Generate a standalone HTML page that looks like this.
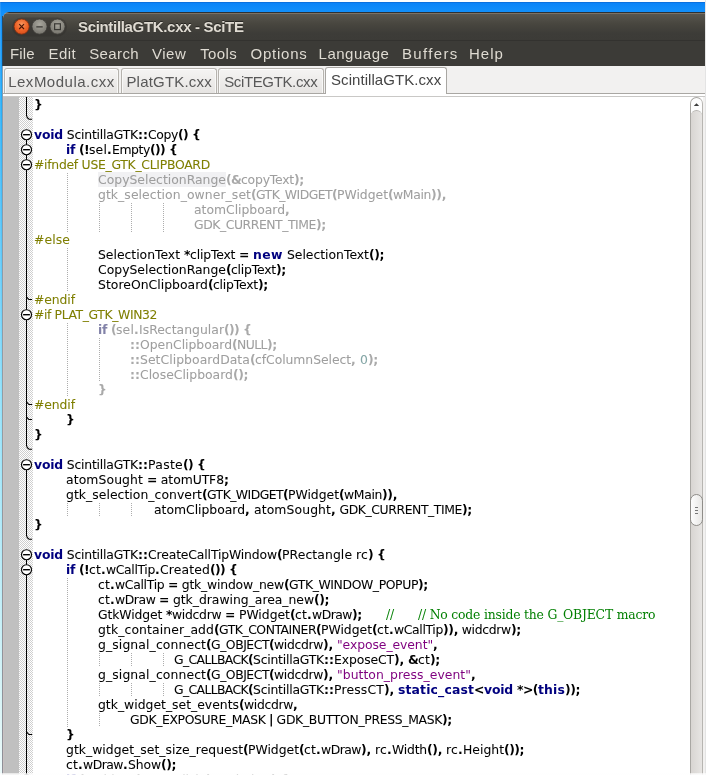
<!DOCTYPE html>
<html><head><meta charset="utf-8"><title>ScintillaGTK.cxx - SciTE</title>
<style>
html,body{margin:0;padding:0}
body{width:706px;height:775px;overflow:hidden;position:relative;background:linear-gradient(#0a70de 0,#0a70de 2.5px,#0a84f8 3.5px,#1290fa 12px,#1a9cf8 60px,#26aef8 100px,#8ee0fa 400px,#d6f4f6 700px,#ecfafa 775px);font-family:"Liberation Sans","DejaVu Sans",sans-serif}
#topw{position:absolute;left:0;top:0;width:706px;height:2px;background:#fdfdfd}
#win{position:absolute;left:3px;top:12px;width:702px;height:763px;background:#f2f1f0;border-radius:6px 0 0 0;overflow:hidden}
#botf{position:absolute;left:0;top:773px;width:706px;height:2px;background:linear-gradient(rgba(255,255,255,.55),rgba(255,255,255,.95));z-index:10}
#lcol0{position:absolute;left:0;top:2px;width:1px;height:773px;background:rgba(255,255,255,.12)}
#lcol{position:absolute;left:2px;top:16px;width:1px;height:50px;background:#2b4963}
#lcol2{position:absolute;left:2px;top:66px;width:1px;height:709px;background:linear-gradient(#7f9cb4,#949ca2 50%,#8e8e96)}
#rcol{position:absolute;left:705px;top:0;width:1px;height:775px;background:#e4e4e4;z-index:9}
#title{position:absolute;left:0;top:0;width:702px;height:29px;box-sizing:border-box;background:linear-gradient(#7d7264 0,#7d7264 1px,#57554e 1px,#48463f 40%,#3d3c38 75%,#3c3b37 100%);border-top:1px solid #2c3136;border-bottom:1px solid #33322f}
#menu{position:absolute;left:0;top:29px;width:702px;height:25px;background:#3c3b37}
#tabs{position:absolute;left:0;top:54px;width:702px;height:29px;background:#f2f1f0}
.tab{position:absolute;top:2px;height:25px;box-sizing:border-box;border:1px solid #b6b3ae;border-bottom:none;border-radius:3px 3px 0 0;background:linear-gradient(#f5f4f3,#e6e4e2);box-shadow:inset 0 1px 0 #fff,inset 1px 0 0 #f8f8f7,inset -1px 0 0 #f8f8f7}
#chrometext{z-index:5;position:absolute;left:0;top:0;width:706px;height:96px;will-change:transform}
.w{position:absolute;white-space:pre}
.mi{font-size:15px;color:#dfdbd2}
.tt{font-size:15px;color:#585858}
.ta{color:#454545}
.ti{font-weight:bold;font-size:15px;color:#dfdbd2;text-shadow:0 -1px 0 rgba(0,0,0,.45)}
.tab.act{top:1px;height:27px;background:#fff;z-index:3;box-shadow:none;border-color:#a9a7a3}
.ln{position:absolute;height:15px;line-height:15px;white-space:pre;font-family:"DejaVu Sans","Liberation Sans",sans-serif;font-size:12.4px;color:#000}
.ln{-webkit-text-stroke-width:0.06px}
.ln span{position:absolute;top:0}
.k,.o,.ik,.io,.s,.c{-webkit-text-stroke-width:0}
.k{font-weight:bold;color:#00007f}.o{font-weight:bold;color:#000}.p{color:#7f7f00}.s{color:#7f007f}.n{color:#007f7f}
.c{font-family:"DejaVu Serif","Liberation Serif",serif;color:#007f00;font-size:12.4px}
.ik{font-weight:bold;color:#8282a8}.io{font-weight:bold;color:#a9a9a9}.ii{color:#9e9e9e}.in{color:#84a6a6}
#hlbox{position:absolute;left:98px;top:172px;width:128px;height:15px;background:#f1f1f3}
.g{position:absolute;width:1px;background:repeating-linear-gradient(#fff 0,#fff 1px,#adadad 1px,#adadad 2px)}
.fold{position:absolute;left:0;top:0}
#edwrap{position:absolute;left:0;top:0;width:706px;height:775px;will-change:transform}
#edbg{position:absolute;left:3px;top:94px;width:702px;height:681px;background:#fff}
#l93{position:absolute;left:3px;top:93px;width:322px;height:1px;background:#a9a7a3}
#l93b{position:absolute;left:447px;top:93px;width:258px;height:1px;background:#a9a7a3}
#l96{position:absolute;left:3px;top:96px;width:702px;height:1px;background:#c9c8c6}
#edge{position:absolute;left:3px;top:97px;width:1px;height:678px;background:#c9c1c1}
#mg{position:absolute;left:4px;top:97px;width:15px;height:678px;background:#c0c0c0}
#fm{position:absolute;left:19px;top:97px;width:14px;height:678px;background:conic-gradient(#fff 25%,#cfcfcf 0 50%,#fff 0 75%,#cfcfcf 0) 0 0/2px 2px}
#sb{position:absolute;left:690px;top:97px;width:13px;height:690px;box-sizing:border-box;border:1px solid #a9a7a3;border-right-color:#b7b5b1;border-radius:6.5px 6.5px 0 0;background:#fdfdfd}
#sbr{position:absolute;left:703px;top:97px;width:3px;height:678px;background:#f2f1f0}
#sbtr{position:absolute;left:691px;top:110px;width:11px;height:680px;border-radius:5.5px 5.5px 0 0;background:linear-gradient(90deg,#d8d5d2,#e7e5e3);border-top:1px solid #b5b3af;box-sizing:border-box}
#thumb{position:absolute;left:690px;top:494px;width:13px;height:32px;box-sizing:border-box;border:1px solid #8f8d89;border-radius:6.5px;background:linear-gradient(90deg,#fdfdfd,#e8e7e5)}
#thumb i{position:absolute;left:4px;width:3px;height:1px;background:#777}

</style></head><body>
<div id="topw"></div><div id="rcol"></div><div id="lcol0"></div><div id="lcol"></div><div id="lcol2"></div>
<div id="win">
 <div id="title">
  <svg style="position:absolute;left:0;top:0" width="80" height="27" viewBox="0 0 80 27">
   <defs>
    <radialGradient id="gc" cx="50%" cy="35%" r="65%"><stop offset="0" stop-color="#f8975f"/><stop offset="0.6" stop-color="#ee6327"/><stop offset="1" stop-color="#d9501c"/></radialGradient>
    <radialGradient id="gg" cx="50%" cy="35%" r="65%"><stop offset="0" stop-color="#a9a79e"/><stop offset="0.6" stop-color="#8b8981"/><stop offset="1" stop-color="#75736c"/></radialGradient>
   </defs>
   <rect x="9" y="4.5" width="55" height="19" rx="9.5" fill="#2f2e2a" opacity="0.4"/>
   <circle cx="18.6" cy="13.6" r="7.6" fill="url(#gc)" stroke="#7a2d10" stroke-width="0.8"/>
   <circle cx="36.5" cy="13.6" r="7.6" fill="url(#gg)" stroke="#3a3935" stroke-width="0.8"/>
   <circle cx="54.5" cy="13.6" r="7.6" fill="url(#gg)" stroke="#3a3935" stroke-width="0.8"/>
   <path d="M16.2 11.2 L21 16 M21 11.2 L16.2 16" stroke="#4a1606" stroke-width="1.1" fill="none"/>
   <path d="M33.3 13.8 H39.7" stroke="#3a3935" stroke-width="1.3" fill="none"/>
   <rect x="51.6" y="10.8" width="5.8" height="5.8" stroke="#3a3935" stroke-width="1.2" fill="none"/>
  </svg>
 </div>
 <div id="menu"></div>
 <div id="tabs">
  <div class="tab" style="left:1px;width:115px"></div>
  <div class="tab" style="left:118px;width:96px"></div>
  <div class="tab" style="left:215px;width:106px"></div>
  <div class="tab act" style="left:322px;width:122px"></div>
 </div>
</div>

<div id="chrometext"><span id="ttl" class="w ti" style="left:78.00px;top:17.5px;letter-spacing:-0.326px">ScintillaGTK.cxx - SciTE</span><span id="m0" class="w mi" style="left:10.00px;top:44.5px;letter-spacing:0.167px">File</span><span id="m1" class="w mi" style="left:48.40px;top:44.5px;letter-spacing:0.499px">Edit</span><span id="m2" class="w mi" style="left:89.20px;top:44.5px;letter-spacing:0.400px">Search</span><span id="m3" class="w mi" style="left:152.00px;top:44.5px;letter-spacing:0.500px">View</span><span id="m4" class="w mi" style="left:200.20px;top:44.5px;letter-spacing:0.375px">Tools</span><span id="m5" class="w mi" style="left:250.60px;top:44.5px;letter-spacing:0.750px">Options</span><span id="m6" class="w mi" style="left:318.60px;top:44.5px;letter-spacing:0.500px">Language</span><span id="m7" class="w mi" style="left:402.00px;top:44.5px;letter-spacing:1.332px">Buffers</span><span id="m8" class="w mi" style="left:469.00px;top:44.5px;letter-spacing:0.999px">Help</span><span id="t0" class="w tt" style="left:8.20px;top:72.5px;letter-spacing:0.501px">LexModula.cxx</span><span id="t1" class="w tt" style="left:126.40px;top:72.5px;letter-spacing:0.200px">PlatGTK.cxx</span><span id="t2" class="w tt" style="left:224.20px;top:72.5px;letter-spacing:-0.364px">SciTEGTK.cxx</span><span id="t3" class="w tt ta" style="left:331.00px;top:71px;letter-spacing:0.066px">ScintillaGTK.cxx</span></div>
<div id="edbg"></div><div id="l93"></div><div id="l93b"></div><div id="l96"></div><div id="edge"></div><div id="mg"></div><div id="fm"></div>
<div id="sbr"></div><div id="sb"></div><div id="sbtr"></div>
<svg style="position:absolute;left:693px;top:102px" width="7" height="5" viewBox="0 0 7 5"><path d="M3.5 1.2 L6.2 4.1 H0.8 Z" fill="#3c3c3c"/></svg>
<div id="thumb"><i style="top:12px"></i><i style="top:15px"></i><i style="top:18px"></i></div>

<div id="edwrap">
<div id="hlbox"></div><i class="g" style="left:67px;top:172px;height:60px"></i><i class="g" style="left:99px;top:202px;height:30px"></i><i class="g" style="left:131px;top:202px;height:30px"></i><i class="g" style="left:163px;top:202px;height:30px"></i><i class="g" style="left:67px;top:247px;height:45px"></i><i class="g" style="left:67px;top:322px;height:75px"></i><i class="g" style="left:99px;top:337px;height:45px"></i><i class="g" style="left:67px;top:502px;height:15px"></i><i class="g" style="left:99px;top:502px;height:15px"></i><i class="g" style="left:131px;top:502px;height:15px"></i><i class="g" style="left:67px;top:577px;height:150px"></i><i class="g" style="left:99px;top:652px;height:15px"></i><i class="g" style="left:131px;top:652px;height:15px"></i><i class="g" style="left:163px;top:652px;height:15px"></i><i class="g" style="left:99px;top:682px;height:15px"></i><i class="g" style="left:131px;top:682px;height:15px"></i><i class="g" style="left:163px;top:682px;height:15px"></i><i class="g" style="left:99px;top:712px;height:15px"></i>
<svg class="fold" width="706" height="775" viewBox="0 0 706 775" stroke="#000" stroke-width="1" fill="none"><g shape-rendering="crispEdges"><path d="M26.5 97 V112"/><path d="M26.5 112 V115.5"/><path d="M26.5 139.5 V142"/><path d="M26.5 142 V144.5"/><path d="M26.5 154.5 V157"/><path d="M26.5 157 V159.5"/><path d="M26.5 169.5 V172"/><path d="M26.5 172 V187"/><path d="M26.5 187 V202"/><path d="M26.5 202 V217"/><path d="M26.5 217 V232"/><path d="M26.5 232 V247"/><path d="M26.5 247 V262"/><path d="M26.5 262 V277"/><path d="M26.5 277 V292"/><path d="M26.5 292 V307"/><path d="M26.5 307 V309.5"/><path d="M26.5 319.5 V322"/><path d="M26.5 322 V337"/><path d="M26.5 337 V352"/><path d="M26.5 352 V367"/><path d="M26.5 367 V382"/><path d="M26.5 382 V397"/><path d="M26.5 397 V412"/><path d="M26.5 412 V427"/><path d="M26.5 427 V442"/><path d="M26.5 442 V445.5"/><path d="M26.5 469.5 V472"/><path d="M26.5 472 V487"/><path d="M26.5 487 V502"/><path d="M26.5 502 V517"/><path d="M26.5 517 V532"/><path d="M26.5 532 V535.5"/><path d="M26.5 559.5 V562"/><path d="M26.5 562 V564.5"/><path d="M26.5 574.5 V577"/><path d="M26.5 577 V592"/><path d="M26.5 592 V607"/><path d="M26.5 607 V622"/><path d="M26.5 622 V637"/><path d="M26.5 637 V652"/><path d="M26.5 652 V667"/><path d="M26.5 667 V682"/><path d="M26.5 682 V697"/><path d="M26.5 697 V712"/><path d="M26.5 712 V727"/><path d="M26.5 727 V742"/><path d="M26.5 742 V757"/><path d="M26.5 757 V772"/><path d="M26.5 772 V774.5"/><path d="M26.5 784.5 V787"/></g><path d="M26.5 115.3 q0.2 3.0 2.6 3.9 h3" stroke-width="1.1"/><circle cx="26.5" cy="134.7" r="5" fill="#fff" stroke-width="1.15"/><path d="M23.1 134.7 H29.9" stroke-width="1.4"/><circle cx="26.5" cy="149.7" r="5" fill="#fff" stroke-width="1.15"/><path d="M23.1 149.7 H29.9" stroke-width="1.4"/><circle cx="26.5" cy="164.7" r="5" fill="#fff" stroke-width="1.15"/><path d="M23.1 164.7 H29.9" stroke-width="1.4"/><path d="M26.7 297.1 l2.2 2.4 h3.2" stroke-width="1.1"/><circle cx="26.5" cy="314.7" r="5" fill="#fff" stroke-width="1.15"/><path d="M23.1 314.7 H29.9" stroke-width="1.4"/><path d="M26.7 402.1 l2.2 2.4 h3.2" stroke-width="1.1"/><path d="M26.7 417.1 l2.2 2.4 h3.2" stroke-width="1.1"/><path d="M26.5 445.3 q0.2 3.0 2.6 3.9 h3" stroke-width="1.1"/><circle cx="26.5" cy="464.7" r="5" fill="#fff" stroke-width="1.15"/><path d="M23.1 464.7 H29.9" stroke-width="1.4"/><path d="M26.5 535.3 q0.2 3.0 2.6 3.9 h3" stroke-width="1.1"/><circle cx="26.5" cy="554.7" r="5" fill="#fff" stroke-width="1.15"/><path d="M23.1 554.7 H29.9" stroke-width="1.4"/><circle cx="26.5" cy="569.7" r="5" fill="#fff" stroke-width="1.15"/><path d="M23.1 569.7 H29.9" stroke-width="1.4"/><path d="M26.7 732.1 l2.2 2.4 h3.2" stroke-width="1.1"/><circle cx="26.5" cy="779.7" r="5" fill="#fff" stroke-width="1.15"/><path d="M23.1 779.7 H29.9" stroke-width="1.4"/></svg>
<div class="ln" style="top:97.0px;left:34px"><span class="o" style="left:0px;letter-spacing:0.17px">}</span></div>
<div class="ln" style="top:112.0px;left:34px"></div>
<div class="ln" style="top:127.0px;left:34px"><span class="k" style="left:0px;letter-spacing:-0.18px">void</span><span class="i" style="left:29px;letter-spacing:-0.20px"> ScintillaGTK</span><span class="o" style="left:104px;letter-spacing:0.04px">::</span><span class="i" style="left:114px;letter-spacing:-0.36px">Copy</span><span class="o" style="left:144px;letter-spacing:-0.66px">()</span><span class="i" style="left:154px;letter-spacing:0.05px"> </span><span class="o" style="left:158px;letter-spacing:0.17px">{</span></div>
<div class="ln" style="top:142.0px;left:66px"><span class="k" style="left:0px;letter-spacing:-0.32px">if</span><span class="i" style="left:9px;letter-spacing:0.05px"> </span><span class="o" style="left:13px;letter-spacing:-0.66px">(!</span><span class="i" style="left:23px;letter-spacing:0.16px">sel</span><span class="o" style="left:41px;letter-spacing:0.28px">.</span><span class="i" style="left:46px;letter-spacing:-0.39px">Empty</span><span class="o" style="left:84px;letter-spacing:-0.67px">())</span><span class="i" style="left:99px;letter-spacing:0.05px"> </span><span class="o" style="left:103px;letter-spacing:0.17px">{</span></div>
<div class="ln" style="top:157.0px;left:34px"><span class="p" style="left:0px;letter-spacing:-0.28px">#ifndef USE_GTK_CLIPBOARD</span></div>
<div class="ln" style="top:172.0px;left:98px"><span class="ii hl" style="left:0px;letter-spacing:0.01px">CopySelectionRange</span><span class="io" style="left:128px;letter-spacing:-0.73px">(&amp;</span><span class="ii" style="left:143px;letter-spacing:-0.21px">copyText</span><span class="io" style="left:196px;letter-spacing:-0.31px">);</span></div>
<div class="ln" style="top:187.0px;left:98px"><span class="ii" style="left:0px;letter-spacing:0.07px">gtk_selection_owner_set</span><span class="io" style="left:153px;letter-spacing:-0.67px">(</span><span class="ii" style="left:158px;letter-spacing:-0.55px">GTK_WIDGET</span><span class="io" style="left:234px;letter-spacing:-0.67px">(</span><span class="ii" style="left:239px;letter-spacing:-0.02px">PWidget</span><span class="io" style="left:290px;letter-spacing:-0.67px">(</span><span class="ii" style="left:295px;letter-spacing:-0.34px">wMain</span><span class="io" style="left:333px;letter-spacing:-0.35px">)),</span></div>
<div class="ln" style="top:202.0px;left:194px"><span class="ii" style="left:0px;letter-spacing:-0.02px">atomClipboard</span><span class="io" style="left:91px;letter-spacing:0.28px">,</span></div>
<div class="ln" style="top:217.0px;left:194px"><span class="ii" style="left:0px;letter-spacing:-0.44px">GDK_CURRENT_TIME</span><span class="io" style="left:122px;letter-spacing:-0.31px">);</span></div>
<div class="ln" style="top:232.0px;left:34px"><span class="p" style="left:0px;letter-spacing:0.09px">#else</span></div>
<div class="ln" style="top:247.0px;left:98px"><span class="i" style="left:0px;letter-spacing:-0.01px">SelectionText </span><span class="o" style="left:86px;letter-spacing:-0.48px">*</span><span class="i" style="left:92px;letter-spacing:-0.17px">clipText </span><span class="o" style="left:141px;letter-spacing:-0.39px">=</span><span class="i" style="left:151px;letter-spacing:0.05px"> </span><span class="k" style="left:155px;letter-spacing:0.44px">new</span><span class="i" style="left:185px;letter-spacing:-0.01px"> SelectionText</span><span class="o" style="left:271px;letter-spacing:-0.43px">();</span></div>
<div class="ln" style="top:262.0px;left:98px"><span class="i" style="left:0px;letter-spacing:0.01px">CopySelectionRange</span><span class="o" style="left:128px;letter-spacing:-0.67px">(</span><span class="i" style="left:133px;letter-spacing:-0.20px">clipText</span><span class="o" style="left:178px;letter-spacing:-0.31px">);</span></div>
<div class="ln" style="top:277.0px;left:98px"><span class="i" style="left:0px;letter-spacing:0.03px">StoreOnClipboard</span><span class="o" style="left:110px;letter-spacing:-0.67px">(</span><span class="i" style="left:115px;letter-spacing:-0.20px">clipText</span><span class="o" style="left:160px;letter-spacing:-0.31px">);</span></div>
<div class="ln" style="top:292.0px;left:34px"><span class="p" style="left:0px;letter-spacing:-0.09px">#endif</span></div>
<div class="ln" style="top:307.0px;left:34px"><span class="p" style="left:0px;letter-spacing:-0.39px">#if PLAT_GTK_WIN32</span></div>
<div class="ln" style="top:322.0px;left:98px"><span class="ik" style="left:0px;letter-spacing:-0.32px">if</span><span class="ii" style="left:9px;letter-spacing:0.05px"> </span><span class="io" style="left:13px;letter-spacing:-0.67px">(</span><span class="ii" style="left:18px;letter-spacing:0.16px">sel</span><span class="io" style="left:36px;letter-spacing:0.28px">.</span><span class="ii" style="left:41px;letter-spacing:0.02px">IsRectangular</span><span class="io" style="left:126px;letter-spacing:-0.67px">())</span><span class="ii" style="left:141px;letter-spacing:0.05px"> </span><span class="io" style="left:145px;letter-spacing:0.17px">{</span></div>
<div class="ln" style="top:337.0px;left:130px"><span class="io" style="left:0px;letter-spacing:0.04px">::</span><span class="ii" style="left:10px;letter-spacing:-0.02px">OpenClipboard</span><span class="io" style="left:102px;letter-spacing:-0.67px">(</span><span class="ii" style="left:107px;letter-spacing:-0.54px">NULL</span><span class="io" style="left:137px;letter-spacing:-0.31px">);</span></div>
<div class="ln" style="top:352.0px;left:130px"><span class="io" style="left:0px;letter-spacing:0.04px">::</span><span class="ii" style="left:10px;letter-spacing:0.05px">SetClipboardData</span><span class="io" style="left:120px;letter-spacing:-0.67px">(</span><span class="ii" style="left:125px;letter-spacing:-0.06px">cfColumnSelect</span><span class="io" style="left:221px;letter-spacing:0.28px">,</span><span class="ii" style="left:226px;letter-spacing:0.05px"> </span><span class="in" style="left:230px;letter-spacing:0.11px">0</span><span class="io" style="left:238px;letter-spacing:-0.31px">);</span></div>
<div class="ln" style="top:367.0px;left:130px"><span class="io" style="left:0px;letter-spacing:0.04px">::</span><span class="ii" style="left:10px;letter-spacing:0.00px">CloseClipboard</span><span class="io" style="left:103px;letter-spacing:-0.43px">();</span></div>
<div class="ln" style="top:382.0px;left:98px"><span class="io" style="left:0px;letter-spacing:0.17px">}</span></div>
<div class="ln" style="top:397.0px;left:34px"><span class="p" style="left:0px;letter-spacing:-0.09px">#endif</span></div>
<div class="ln" style="top:412.0px;left:66px"><span class="o" style="left:0px;letter-spacing:0.17px">}</span></div>
<div class="ln" style="top:427.0px;left:34px"><span class="o" style="left:0px;letter-spacing:0.17px">}</span></div>
<div class="ln" style="top:442.0px;left:34px"></div>
<div class="ln" style="top:457.0px;left:34px"><span class="k" style="left:0px;letter-spacing:-0.18px">void</span><span class="i" style="left:29px;letter-spacing:-0.20px"> ScintillaGTK</span><span class="o" style="left:104px;letter-spacing:0.04px">::</span><span class="i" style="left:114px;letter-spacing:0.31px">Paste</span><span class="o" style="left:149px;letter-spacing:-0.66px">()</span><span class="i" style="left:159px;letter-spacing:0.05px"> </span><span class="o" style="left:163px;letter-spacing:0.17px">{</span></div>
<div class="ln" style="top:472.0px;left:66px"><span class="i" style="left:0px;letter-spacing:0.10px">atomSought </span><span class="o" style="left:81px;letter-spacing:-0.39px">=</span><span class="i" style="left:91px;letter-spacing:-0.08px"> atomUTF8</span><span class="o" style="left:158px;letter-spacing:0.03px">;</span></div>
<div class="ln" style="top:487.0px;left:66px"><span class="i" style="left:0px;letter-spacing:0.04px">gtk_selection_convert</span><span class="o" style="left:136px;letter-spacing:-0.67px">(</span><span class="i" style="left:141px;letter-spacing:-0.55px">GTK_WIDGET</span><span class="o" style="left:217px;letter-spacing:-0.67px">(</span><span class="i" style="left:222px;letter-spacing:-0.02px">PWidget</span><span class="o" style="left:273px;letter-spacing:-0.67px">(</span><span class="i" style="left:278px;letter-spacing:-0.34px">wMain</span><span class="o" style="left:316px;letter-spacing:-0.35px">)),</span></div>
<div class="ln" style="top:502.0px;left:154px"><span class="i" style="left:0px;letter-spacing:-0.02px">atomClipboard</span><span class="o" style="left:91px;letter-spacing:0.28px">,</span><span class="i" style="left:96px;letter-spacing:0.10px"> atomSought</span><span class="o" style="left:177px;letter-spacing:0.28px">,</span><span class="i" style="left:182px;letter-spacing:-0.41px"> GDK_CURRENT_TIME</span><span class="o" style="left:308px;letter-spacing:-0.31px">);</span></div>
<div class="ln" style="top:517.0px;left:34px"><span class="o" style="left:0px;letter-spacing:0.17px">}</span></div>
<div class="ln" style="top:532.0px;left:34px"></div>
<div class="ln" style="top:547.0px;left:34px"><span class="k" style="left:0px;letter-spacing:-0.18px">void</span><span class="i" style="left:29px;letter-spacing:-0.20px"> ScintillaGTK</span><span class="o" style="left:104px;letter-spacing:0.04px">::</span><span class="i" style="left:114px;letter-spacing:-0.14px">CreateCallTipWindow</span><span class="o" style="left:243px;letter-spacing:-0.67px">(</span><span class="i" style="left:248px;letter-spacing:0.09px">PRectangle rc</span><span class="o" style="left:334px;letter-spacing:-0.67px">)</span><span class="i" style="left:339px;letter-spacing:0.05px"> </span><span class="o" style="left:343px;letter-spacing:0.17px">{</span></div>
<div class="ln" style="top:562.0px;left:66px"><span class="k" style="left:0px;letter-spacing:-0.32px">if</span><span class="i" style="left:9px;letter-spacing:0.05px"> </span><span class="o" style="left:13px;letter-spacing:-0.66px">(!</span><span class="i" style="left:23px;letter-spacing:0.16px">ct</span><span class="o" style="left:35px;letter-spacing:0.28px">.</span><span class="i" style="left:40px;letter-spacing:-0.35px">wCallTip</span><span class="o" style="left:89px;letter-spacing:0.28px">.</span><span class="i" style="left:94px;letter-spacing:0.14px">Created</span><span class="o" style="left:144px;letter-spacing:-0.67px">())</span><span class="i" style="left:159px;letter-spacing:0.05px"> </span><span class="o" style="left:163px;letter-spacing:0.17px">{</span></div>
<div class="ln" style="top:577.0px;left:98px"><span class="i" style="left:0px;letter-spacing:0.16px">ct</span><span class="o" style="left:12px;letter-spacing:0.28px">.</span><span class="i" style="left:17px;letter-spacing:-0.30px">wCallTip </span><span class="o" style="left:70px;letter-spacing:-0.39px">=</span><span class="i" style="left:80px;letter-spacing:-0.19px"> gtk_window_new</span><span class="o" style="left:186px;letter-spacing:-0.67px">(</span><span class="i" style="left:191px;letter-spacing:-0.39px">GTK_WINDOW_POPUP</span><span class="o" style="left:320px;letter-spacing:-0.31px">);</span></div>
<div class="ln" style="top:592.0px;left:98px"><span class="i" style="left:0px;letter-spacing:0.16px">ct</span><span class="o" style="left:12px;letter-spacing:0.28px">.</span><span class="i" style="left:17px;letter-spacing:-0.41px">wDraw </span><span class="o" style="left:61px;letter-spacing:-0.39px">=</span><span class="i" style="left:71px;letter-spacing:-0.02px"> gtk_drawing_area_new</span><span class="o" style="left:216px;letter-spacing:-0.43px">();</span></div>
<div class="ln" style="top:607.0px;left:98px"><span class="i" style="left:0px;letter-spacing:-0.12px">GtkWidget </span><span class="o" style="left:68px;letter-spacing:-0.48px">*</span><span class="i" style="left:74px;letter-spacing:-0.29px">widcdrw </span><span class="o" style="left:127px;letter-spacing:-0.39px">=</span><span class="i" style="left:137px;letter-spacing:-0.01px"> PWidget</span><span class="o" style="left:192px;letter-spacing:-0.67px">(</span><span class="i" style="left:197px;letter-spacing:0.16px">ct</span><span class="o" style="left:209px;letter-spacing:0.28px">.</span><span class="i" style="left:214px;letter-spacing:-0.50px">wDraw</span><span class="o" style="left:254px;letter-spacing:-0.31px">);</span><span class="c" style="left:288px;letter-spacing:-0.18px">//</span><span class="c" style="left:320px;letter-spacing:-0.20px">// No code inside the G_OBJECT macro</span></div>
<div class="ln" style="top:622.0px;left:98px"><span class="i" style="left:0px;letter-spacing:0.10px">gtk_container_add</span><span class="o" style="left:116px;letter-spacing:-0.67px">(</span><span class="i" style="left:121px;letter-spacing:-0.47px">GTK_CONTAINER</span><span class="o" style="left:218px;letter-spacing:-0.67px">(</span><span class="i" style="left:223px;letter-spacing:-0.02px">PWidget</span><span class="o" style="left:274px;letter-spacing:-0.67px">(</span><span class="i" style="left:279px;letter-spacing:0.16px">ct</span><span class="o" style="left:291px;letter-spacing:0.28px">.</span><span class="i" style="left:296px;letter-spacing:-0.35px">wCallTip</span><span class="o" style="left:345px;letter-spacing:-0.35px">)),</span><span class="i" style="left:360px;letter-spacing:-0.29px"> widcdrw</span><span class="o" style="left:413px;letter-spacing:-0.31px">);</span></div>
<div class="ln" style="top:637.0px;left:98px"><span class="i" style="left:0px;letter-spacing:0.11px">g_signal_connect</span><span class="o" style="left:108px;letter-spacing:-0.67px">(</span><span class="i" style="left:113px;letter-spacing:-0.47px">G_OBJECT</span><span class="o" style="left:171px;letter-spacing:-0.67px">(</span><span class="i" style="left:176px;letter-spacing:-0.34px">widcdrw</span><span class="o" style="left:225px;letter-spacing:-0.19px">),</span><span class="i" style="left:235px;letter-spacing:0.05px"> </span><span class="s" style="left:239px;letter-spacing:-0.08px">&quot;expose_event&quot;</span><span class="o" style="left:335px;letter-spacing:0.28px">,</span></div>
<div class="ln" style="top:652.0px;left:174px"><span class="i" style="left:0px;letter-spacing:-0.63px">G_CALLBACK</span><span class="o" style="left:74px;letter-spacing:-0.67px">(</span><span class="i" style="left:79px;letter-spacing:-0.22px">ScintillaGTK</span><span class="o" style="left:150px;letter-spacing:0.04px">::</span><span class="i" style="left:160px;letter-spacing:-0.12px">ExposeCT</span><span class="o" style="left:220px;letter-spacing:-0.19px">),</span><span class="i" style="left:230px;letter-spacing:0.05px"> </span><span class="o" style="left:234px;letter-spacing:-0.81px">&amp;</span><span class="i" style="left:244px;letter-spacing:0.16px">ct</span><span class="o" style="left:256px;letter-spacing:-0.31px">);</span></div>
<div class="ln" style="top:667.0px;left:98px"><span class="i" style="left:0px;letter-spacing:0.11px">g_signal_connect</span><span class="o" style="left:108px;letter-spacing:-0.67px">(</span><span class="i" style="left:113px;letter-spacing:-0.47px">G_OBJECT</span><span class="o" style="left:171px;letter-spacing:-0.67px">(</span><span class="i" style="left:176px;letter-spacing:-0.34px">widcdrw</span><span class="o" style="left:225px;letter-spacing:-0.19px">),</span><span class="i" style="left:235px;letter-spacing:0.05px"> </span><span class="s" style="left:239px;letter-spacing:0.04px">&quot;button_press_event&quot;</span><span class="o" style="left:373px;letter-spacing:0.28px">,</span></div>
<div class="ln" style="top:682.0px;left:174px"><span class="i" style="left:0px;letter-spacing:-0.63px">G_CALLBACK</span><span class="o" style="left:74px;letter-spacing:-0.67px">(</span><span class="i" style="left:79px;letter-spacing:-0.22px">ScintillaGTK</span><span class="o" style="left:150px;letter-spacing:0.04px">::</span><span class="i" style="left:160px;letter-spacing:0.17px">PressCT</span><span class="o" style="left:210px;letter-spacing:-0.19px">),</span><span class="i" style="left:220px;letter-spacing:0.05px"> </span><span class="k" style="left:224px;letter-spacing:0.15px">static_cast</span><span class="o" style="left:300px;letter-spacing:-0.39px">&lt;</span><span class="k" style="left:310px;letter-spacing:-0.18px">void</span><span class="i" style="left:339px;letter-spacing:0.05px"> </span><span class="o" style="left:343px;letter-spacing:-0.51px">*&gt;(</span><span class="k" style="left:364px;letter-spacing:0.16px">this</span><span class="o" style="left:391px;letter-spacing:-0.43px">));</span></div>
<div class="ln" style="top:697.0px;left:98px"><span class="i" style="left:0px;letter-spacing:0.00px">gtk_widget_set_events</span><span class="o" style="left:141px;letter-spacing:-0.67px">(</span><span class="i" style="left:146px;letter-spacing:-0.34px">widcdrw</span><span class="o" style="left:195px;letter-spacing:0.28px">,</span></div>
<div class="ln" style="top:712.0px;left:130px"><span class="i" style="left:0px;letter-spacing:-0.37px">GDK_EXPOSURE_MASK </span><span class="o" style="left:139px;letter-spacing:-0.53px">|</span><span class="i" style="left:143px;letter-spacing:-0.32px"> GDK_BUTTON_PRESS_MASK</span><span class="o" style="left:312px;letter-spacing:-0.31px">);</span></div>
<div class="ln" style="top:727.0px;left:66px"><span class="o" style="left:0px;letter-spacing:0.17px">}</span></div>
<div class="ln" style="top:742.0px;left:66px"><span class="i" style="left:0px;letter-spacing:0.02px">gtk_widget_set_size_request</span><span class="o" style="left:177px;letter-spacing:-0.67px">(</span><span class="i" style="left:182px;letter-spacing:-0.02px">PWidget</span><span class="o" style="left:233px;letter-spacing:-0.67px">(</span><span class="i" style="left:238px;letter-spacing:0.16px">ct</span><span class="o" style="left:250px;letter-spacing:0.28px">.</span><span class="i" style="left:255px;letter-spacing:-0.50px">wDraw</span><span class="o" style="left:295px;letter-spacing:-0.19px">),</span><span class="i" style="left:305px;letter-spacing:0.14px"> rc</span><span class="o" style="left:321px;letter-spacing:0.28px">.</span><span class="i" style="left:326px;letter-spacing:-0.20px">Width</span><span class="o" style="left:361px;letter-spacing:-0.35px">(),</span><span class="i" style="left:376px;letter-spacing:0.14px"> rc</span><span class="o" style="left:392px;letter-spacing:0.28px">.</span><span class="i" style="left:397px;letter-spacing:0.01px">Height</span><span class="o" style="left:438px;letter-spacing:-0.49px">());</span></div>
<div class="ln" style="top:757.0px;left:66px"><span class="i" style="left:0px;letter-spacing:0.16px">ct</span><span class="o" style="left:12px;letter-spacing:0.28px">.</span><span class="i" style="left:17px;letter-spacing:-0.50px">wDraw</span><span class="o" style="left:57px;letter-spacing:0.28px">.</span><span class="i" style="left:62px;letter-spacing:-0.11px">Show</span><span class="o" style="left:95px;letter-spacing:-0.43px">();</span></div>
<div class="ln" style="top:772.0px;left:66px"><span class="k" style="left:0px;letter-spacing:-0.32px">if</span><span class="i" style="left:9px;letter-spacing:0.05px"> </span><span class="o" style="left:13px;letter-spacing:-0.67px">(</span><span class="i" style="left:18px;letter-spacing:-0.02px">PWidget</span><span class="o" style="left:69px;letter-spacing:-0.67px">(</span><span class="i" style="left:74px;letter-spacing:0.16px">ct</span><span class="o" style="left:86px;letter-spacing:0.28px">.</span><span class="i" style="left:91px;letter-spacing:-0.35px">wCallTip</span><span class="o" style="left:140px;letter-spacing:-0.40px">)-&gt;</span><span class="i" style="left:160px;letter-spacing:-0.34px">window</span><span class="o" style="left:205px;letter-spacing:-0.67px">)</span><span class="i" style="left:210px;letter-spacing:0.05px"> </span><span class="o" style="left:214px;letter-spacing:0.17px">{</span></div>
</div>
<div id="botf"></div>
</body></html>
